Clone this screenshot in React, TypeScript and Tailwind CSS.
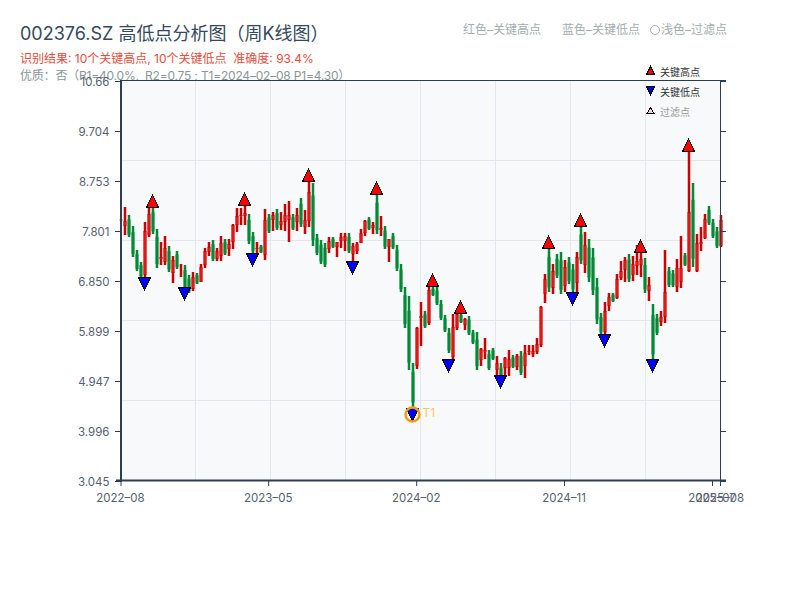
const fontStack = "font-['Inter','Noto_Sans_CJK_SC',sans-serif]";

// [color, high, low, bodyTop?, bodyBottom?] in page pixels, one bar every 4px from x=120.5
type Bar = [string, number, number, number?, number?];

const bars: Bar[] = [
  ["r", 219, 221], ["r", 207, 235, 221, 226], ["g", 215, 237], ["g", 226, 257], ["g", 250, 271], ["g", 262, 278],
  ["r", 222, 277, 231, 275], ["r", 207, 237, 214, 235], ["g", 207, 234], ["g", 229, 268], ["r", 242, 265, 257, 259],
  ["r", 236, 265, 248, 262], ["g", 246, 272], ["r", 256, 283, 260, 273], ["g", 251, 269], ["r", 264, 277],
  ["g", 265, 290], ["g", 275, 293], ["r", 272, 291, 277, 289], ["g", 273, 284], ["r", 264, 282, 267, 282],
  ["r", 248, 268, 251, 265], ["r", 242, 256, 247, 252], ["g", 240, 261], ["r", 248, 261, 251, 259],
  ["r", 236, 261, 243, 256], ["g", 239, 255], ["r", 239, 256, 244, 249], ["r", 224, 249, 225, 242],
  ["r", 208, 232, 216, 225], ["r", 208, 225, 215, 216], ["r", 206, 225, 213, 216], ["g", 214, 244],
  ["g", 232, 253], ["r", 242, 253, 248, 249], ["g", 245, 253], ["r", 209, 260, 220, 255], ["g", 214, 233],
  ["r", 212, 231, 215, 220], ["g", 209, 230], ["r", 212, 230, 221, 225], ["r", 204, 231, 215, 222],
  ["r", 201, 242, 215, 220], ["g", 214, 230], ["r", 208, 231, 215, 222], ["g", 198, 227], ["r", 210, 234, 220, 227],
  ["r", 180, 227, 192, 221], ["g", 183, 246], ["g", 234, 255], ["g", 240, 264], ["g", 243, 267],
  ["r", 237, 253, 241, 249], ["g", 237, 248], ["r", 242, 257, 242, 247], ["r", 233, 248, 237, 241],
  ["r", 233, 251, 236, 241], ["g", 233, 253], ["r", 243, 261, 246, 254], ["r", 242, 254, 244, 251],
  ["r", 229, 243, 233, 243], ["r", 220, 236, 221, 233], ["g", 217, 230], ["r", 222, 234, 225, 228],
  ["g", 195, 234], ["r", 216, 236, 228, 230], ["g", 226, 249], ["r", 239, 262, 239, 247], ["g", 233, 249],
  ["g", 245, 271], ["g", 264, 292], ["g", 287, 328], ["g", 296, 370], ["g", 363, 407], ["r", 327, 369, 328, 366],
  ["r", 302, 346, 316, 318], ["g", 311, 328], ["r", 287, 325, 290, 323], ["g", 287, 296], ["g", 287, 305],
  ["g", 300, 320], ["g", 315, 332], ["g", 328, 353], ["r", 314, 359, 327, 357], ["r", 313, 330, 314, 328],
  ["g", 313, 323], ["r", 318, 330, 319, 325], ["g", 316, 335], ["g", 330, 344], ["g", 332, 370],
  ["r", 348, 366, 349, 360], ["r", 338, 359, 350, 352], ["g", 350, 370], ["g", 348, 360], ["r", 356, 376, 363, 370],
  ["g", 363, 386], ["r", 357, 375, 358, 368], ["r", 350, 376, 359, 368], ["g", 355, 368], ["r", 354, 370, 356, 367],
  ["g", 351, 375], ["r", 345, 378, 353, 366], ["r", 345, 355, 351, 352], ["r", 345, 357, 351, 354],
  ["r", 338, 354, 344, 352], ["r", 306, 347, 307, 345], ["r", 274, 303, 279, 294], ["g", 248, 292],
  ["r", 264, 294, 271, 288], ["g", 254, 278], ["g", 252, 294], ["r", 260, 292, 267, 286], ["g", 257, 284],
  ["g", 264, 292], ["r", 252, 292, 257, 283], ["g", 227, 264], ["r", 232, 273, 245, 265], ["g", 239, 282],
  ["g", 248, 295], ["g", 278, 324], ["g", 313, 334], ["r", 302, 334, 311, 332], ["r", 293, 311, 297, 306],
  ["g", 293, 302], ["r", 274, 299, 279, 298], ["r", 261, 280, 271, 278], ["r", 257, 282, 260, 270],
  ["g", 254, 282], ["r", 256, 281, 264, 275], ["r", 245, 275, 261, 266], ["r", 245, 277, 259, 265],
  ["g", 258, 293], ["r", 277, 301, 285, 291], ["g", 304, 360], ["g", 314, 335], ["r", 311, 326, 317, 322],
  ["r", 250, 323, 292, 317], ["g", 267, 287], ["g", 270, 287], ["r", 259, 292, 268, 287], ["r", 236, 288, 268, 282],
  ["g", 253, 266], ["r", 150, 272, 212, 271], ["g", 183, 267], ["r", 234, 272, 243, 271], ["r", 227, 251, 242, 244],
  ["r", 214, 239, 219, 238], ["g", 206, 225], ["g", 219, 238], ["g", 227, 248], ["r", 215, 247, 220, 246],
];

const highs: [number, number][] = [
  [152.5, 207.5], [244.5, 205.5], [308.5, 181.5], [376.5, 194.5], [432.5, 286.5],
  [460.5, 313.5], [548.5, 248.5], [580.5, 226.5], [640.5, 252.5], [688.5, 151.5],
];

const lows: [number, number][] = [
  [144.5, 277.5], [184.5, 287.5], [252.5, 253.5], [352.5, 261.5], [448.5, 359.5],
  [500.5, 375.5], [572.5, 292.5], [604.5, 334.5], [652.5, 359.5], [412.5, 408.5],
];

const yLabels = [
  ["10.66", 81], ["9.704", 131], ["8.753", 181], ["7.801", 231], ["6.850", 281],
  ["5.899", 331], ["4.947", 381], ["3.996", 431], ["3.045", 481],
] as const;

const xLabels = [
  ["2022–08", 121], ["2023–05", 268.7], ["2024–02", 416.7], ["2024–11", 564.5], ["2025–07", 712.5], ["2025–08", 720.5],
] as const;

const gridX = [195.5, 270.5, 345.5, 420.5, 495.5, 570.5, 645.5];
const gridY = [160.5, 240.5, 320.5, 400.5];

function Chart() {
  return (
    <svg width={800} height={540} viewBox="0 60 800 540" className="relative -mt-[24px] block">
      <rect x={121} y={81} width={600} height={400} fill="#f8f9fb" />
      {gridX.map((x) => (
        <line key={x} x1={x} x2={x} y1={81} y2={480} stroke="#e3e6ec" strokeWidth={1} />
      ))}
      {gridY.map((y) => (
        <line key={y} x1={121} x2={720} y1={y} y2={y} stroke="#e3e6ec" strokeWidth={1} />
      ))}

      {/* candles */}
      {bars.map(([c, hi, lo, bt, bb], i) => {
        const x = 120 + 4 * i;
        const isUp = c === "r";
        const dark = isUp ? "#cc0000" : "#008a36";
        const top = bt ?? (isUp ? hi : hi + (lo - hi) * 0.2);
        const bottom = bb ?? (isUp ? hi : lo - (lo - hi) * 0.1);
        return (
          <g key={i}>
            <rect x={x - 0.25} y={hi} width={2.5} height={lo - hi} fill={dark} />
            {bottom > top && (
              <>
                <rect x={x - 0.5} y={top} width={3} height={bottom - top} fill={dark} />
                {isUp && <rect x={x + 0.5} y={top + 1} width={1} height={Math.max(bottom - top - 2, 1)} fill="#ff2a2a" />}
              </>
            )}
          </g>
        );
      })}

      {/* axes */}
      <line x1={121} x2={121} y1={80} y2={482} stroke="#2c3e50" strokeWidth={2} />
      <line x1={116} x2={726} y1={480.5} y2={480.5} stroke="#2c3e50" strokeWidth={2} />
      <line x1={120} x2={726} y1={80.5} y2={80.5} stroke="#2c3e50" strokeWidth={1} />
      <line x1={720.5} x2={720.5} y1={80} y2={481} stroke="#2c3e50" strokeWidth={1} />
      {yLabels.map(([label, y]) => (
        <g key={label}>
          <line x1={115} x2={121} y1={y + 0.5} y2={y + 0.5} stroke="#2c3e50" />
          <line x1={720} x2={726} y1={y + 0.5} y2={y + 0.5} stroke="#2c3e50" />
          <text x={109.5} y={y + 5} textAnchor="end" fontSize={11.5} fill="#56616f">{label}</text>
        </g>
      ))}
      {xLabels.map(([label, x]) => (
        <g key={label}>
          <line x1={x} x2={x} y1={480} y2={486} stroke="#2c3e50" />
          <text x={x - 0.5} y={502} textAnchor="middle" fontSize={11.5} fill="#56616f">{label}</text>
        </g>
      ))}

      {/* markers */}
      <g shapeRendering="crispEdges">
        {highs.map(([x, y]) => (
          <polygon key={x} points={`${x},${y - 12.5} ${x + 6},${y} ${x - 6},${y}`} fill="#ff0000" stroke="#000" strokeWidth={1} />
        ))}
        {lows.map(([x, y]) => (
          <polygon key={x} points={`${x - 6},${y} ${x + 6},${y} ${x},${y + 12.5}`} fill="#0000ff" stroke="#000" strokeWidth={1} />
        ))}
      </g>
      <circle cx={412.5} cy={414.5} r={7} fill="none" stroke="#f39c12" strokeWidth={2.5} />
      <text x={422.5} y={417} fontSize={12} fill="#f8c471">T1</text>

      {/* legend */}
      <g shapeRendering="crispEdges">
        <polygon points="650.5,66.5 654.5,74.5 646.5,74.5" fill="#ff0000" stroke="#000" />
        <polygon points="646.5,86.5 654.5,86.5 650.5,94.5" fill="#0000ff" stroke="#000" />
        <polygon points="650.5,107.5 654,113.5 647,113.5" fill="#ffd5d5" stroke="#000" />
      </g>
      <text x={660} y={76} fontSize={10} fill="#333">关键高点</text>
      <text x={660} y={96} fontSize={10} fill="#333">关键低点</text>
      <text x={660} y={116} fontSize={10} fill="#999">过滤点</text>
    </svg>
  );
}

export default function App() {
  return (
    <div className={`w-[800px] h-[600px] overflow-hidden bg-white ${fontStack}`}>
      <div className="flex h-[84px] items-start justify-between pl-[20px] pr-[73px] pt-[22px]">
        <div>
          <h1 className="text-[18px] leading-[24px] font-normal text-[#34495e]">002376.SZ 高低点分析图（周K线图）</h1>
          <p className="mt-[5px] text-[12px] leading-[16px] text-[#e74c3c] whitespace-pre">识别结果: 10个关键高点, 10个关键低点  准确度: 93.4%</p>
          <p className="mt-[1px] text-[12px] leading-[16px] tracking-[-0.2px] text-[#8a9799] whitespace-pre">优质：否（R1=40.0%,  R2=0.75 ; T1=2024–02–08 P1=4.30）</p>
        </div>
        <div className="flex items-center text-[12px] leading-[16px] text-[#a3adb0]">
          <span className="w-[79px] whitespace-nowrap">红色–关键高点</span>
          <span className="ml-[20px] w-[79px] whitespace-nowrap">蓝色–关键低点</span>
          <span className="ml-[9px] h-[10px] w-[10px] rounded-full border border-[#a3adb0]" />
          <span className="ml-[1px]">浅色–过滤点</span>
        </div>
      </div>
      <Chart />
    </div>
  );
}
